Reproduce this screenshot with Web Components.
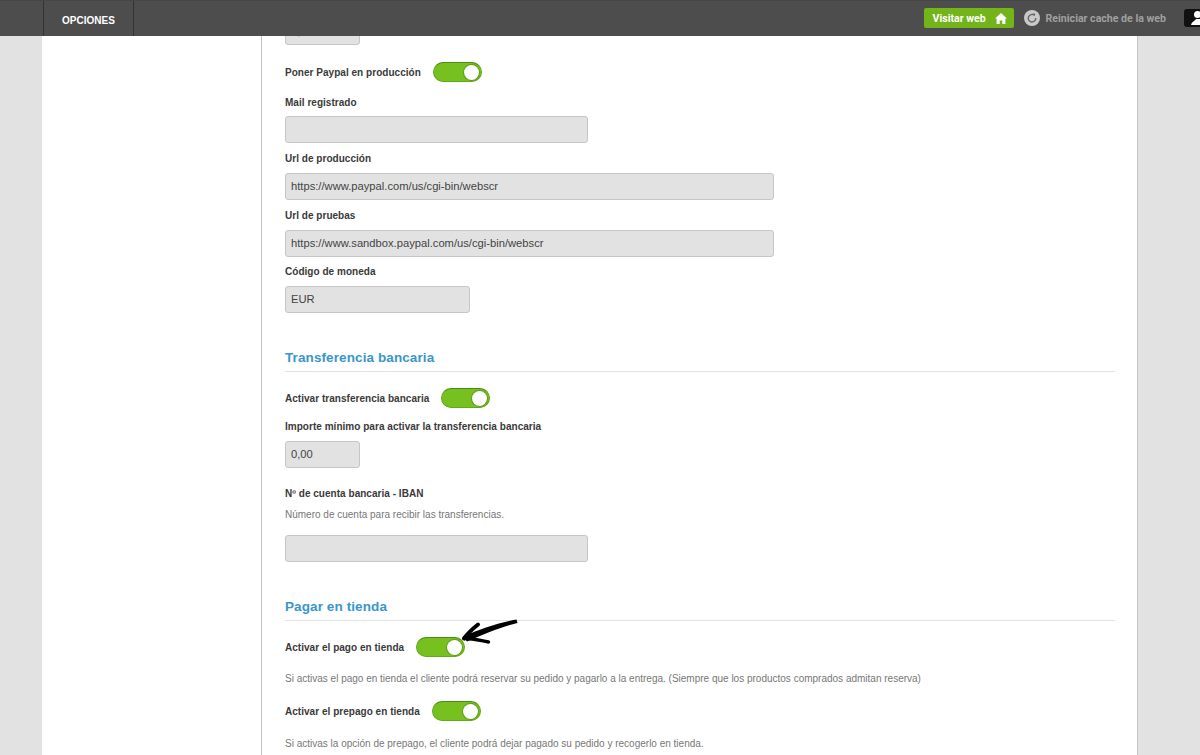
<!DOCTYPE html>
<html lang="es">
<head>
<meta charset="utf-8">
<title>Opciones</title>
<style>
  html, body { margin: 0; height: 755px; overflow: hidden; background: #e2e2e2; }
  body { font-family: "Liberation Sans", Arial, sans-serif; }
  x-field-label, x-toggle-row, x-text-box, x-section-title, x-help-text { --gap: 0px; margin-top: var(--gap); }
</style>
</head>
<body>
<x-top-bar></x-top-bar>
<x-page>
  <x-text-box width="75" value="0,00" style="--gap:-18px"></x-text-box>
  <x-toggle-row style="--gap:17px">Poner Paypal en producción</x-toggle-row>

  <x-field-label style="--gap:13px">Mail registrado</x-field-label>
  <x-text-box width="303" style="--gap:7px"></x-text-box>
  <x-field-label style="--gap:8px">Url de producción</x-field-label>
  <x-text-box width="489" value="https://www.paypal.com/us/cgi-bin/webscr" style="--gap:8px"></x-text-box>
  <x-field-label style="--gap:8px">Url de pruebas</x-field-label>
  <x-text-box width="489" value="https://www.sandbox.paypal.com/us/cgi-bin/webscr" style="--gap:8px"></x-text-box>
  <x-field-label style="--gap:7px">Código de moneda</x-field-label>
  <x-text-box width="185" value="EUR" style="--gap:8px"></x-text-box>

  <x-section-title style="--gap:34px">Transferencia bancaria</x-section-title>
  <x-toggle-row style="--gap:16px">Activar transferencia bancaria</x-toggle-row>
  <x-field-label style="--gap:11px">Importe mínimo para activar la transferencia bancaria</x-field-label>
  <x-text-box width="75" value="0,00" style="--gap:8px"></x-text-box>
  <x-field-label style="--gap:18px">Nº de cuenta bancaria - IBAN</x-field-label>
  <x-help-text style="--gap:7px">Número de cuenta para recibir las transferencias.</x-help-text>
  <x-text-box width="303" style="--gap:14px"></x-text-box>

  <x-section-title style="--gap:34px">Pagar en tienda</x-section-title>
  <x-toggle-row arrow style="--gap:16px">Activar el pago en tienda</x-toggle-row>
  <x-help-text style="--gap:14px">Si activas el pago en tienda el cliente podrá reservar su pedido y pagarlo a la entrega. (Siempre que los productos comprados admitan reserva)</x-help-text>
  <x-toggle-row style="--gap:16px">Activar el prepago en tienda</x-toggle-row>
  <x-help-text style="--gap:15px">Si activas la opción de prepago, el cliente podrá dejar pagado su pedido y recogerlo en tienda.</x-help-text>
</x-page>

<script>
class TopBar extends HTMLElement {
  constructor() {
    super();
    this.attachShadow({mode: "open"});
    this.shadowRoot.innerHTML = `
      <style>
        :host { display: flex; align-items: stretch; position: relative; z-index: 2; height: 36px; background: #4d4d4d; box-sizing: border-box; border-top: 1px solid #454545; font-family: "Roboto", "Liberation Sans", sans-serif; }
        .tab { margin-left: 43px; width: 91px; padding-top: 4px; box-sizing: border-box; border-left: 1px solid #333; border-right: 1px solid #333; color: #fff; font: bold 10px "Liberation Sans", Arial, sans-serif; display: flex; align-items: center; justify-content: center; }
        .right { margin-left: auto; display: flex; align-items: center; }
        .visit { width: 90px; height: 20px; box-sizing: border-box; margin-top: -1px; padding: 0 7px 0 9px; display: flex; align-items: center; justify-content: space-between; background: #72b41a; border-radius: 2px; color: #fff; font-size: 10.6px; font-weight: 700; }
        .reload { margin-left: 10px; display: flex; align-items: center; gap: 6px; color: #a0a0a0; font-size: 10.6px; font-weight: 700; margin-top: -1px; }
        .user { margin-left: 18px; width: 16px; height: 18px; margin-top: -1px; background: #111; border-radius: 3px 0 0 3px; overflow: hidden; }
        svg { display: block; }
      </style>
      <div class="tab">OPCIONES</div>
      <div class="right">
        <div class="visit">Visitar web
          <svg width="12" height="11" viewBox="0 0 12 11"><path d="M6 0 L12 5.6 L10.4 5.6 L10.4 11 L7.3 11 L7.3 7.4 L4.7 7.4 L4.7 11 L1.6 11 L1.6 5.6 L0 5.6 Z" fill="#fff"/></svg>
        </div>
        <div class="reload">
          <svg width="16" height="16" viewBox="0 0 16 16"><circle cx="8" cy="8" r="8" fill="#c9c9c9"/><path d="M10.3 5.2 A3.8 3.8 0 1 0 11.8 8" fill="none" stroke="#666" stroke-width="1.4"/><path d="M8.6 3.4 L11.2 3.6 L10.8 6.2 Z" fill="#666"/></svg>
          Reiniciar cache de la web
        </div>
        <div class="user">
          <svg width="16" height="18" viewBox="0 0 16 18"><circle cx="13.5" cy="5.5" r="3.5" fill="#fff"/><path d="M7 16 C8 12.5 11 12 12 10 L16 10 L16 16 Z" fill="#fff"/></svg>
        </div>
      </div>
    `;
  }
}

class Page extends HTMLElement {
  constructor() {
    super();
    this.attachShadow({mode: "open"});
    this.shadowRoot.innerHTML = `
      <style>
        :host { display: flex; height: 719px; margin-left: 42px; width: 1096px; box-sizing: border-box; background: #fff; border-right: 1px solid #c4c4c4; overflow: hidden; }
        .side { width: 219px; flex: none; border-right: 1px solid #c4c4c4; }
        .main { flex: 1; min-width: 0; padding-left: 23px; padding-right: 22px; display: flex; flex-direction: column; }
      </style>
      <div class="side"></div>
      <div class="main"><slot></slot></div>
    `;
  }
}

class FieldLabel extends HTMLElement {
  constructor() {
    super();
    this.attachShadow({mode: "open"});
    this.shadowRoot.innerHTML = `
      <style>
        :host { display: block; height: 14px; line-height: 16px; color: #3a3a3a; font-size: 10px; font-weight: 700; letter-spacing: .03px; white-space: nowrap; }
      </style>
      <slot></slot>
    `;
  }
}

class HelpText extends HTMLElement {
  constructor() {
    super();
    this.attachShadow({mode: "open"});
    this.shadowRoot.innerHTML = `
      <style>
        :host { display: block; height: 14px; line-height: 16px; color: #777; font-size: 10px; white-space: nowrap; }
      </style>
      <slot></slot>
    `;
  }
}

class SectionTitle extends HTMLElement {
  constructor() {
    super();
    this.attachShadow({mode: "open"});
    this.shadowRoot.innerHTML = `
      <style>
        :host { display: block; height: 25px; box-sizing: border-box; line-height: 22px; border-bottom: 1px solid #e2e2e2; color: #3a96cc; font-size: 13.5px; font-weight: 700; letter-spacing: .1px; white-space: nowrap; }
      </style>
      <slot></slot>
    `;
  }
}

class TextBox extends HTMLElement {
  constructor() {
    super();
    this.attachShadow({mode: "open"});
    this.shadowRoot.innerHTML = `
      <style>
        :host { display: block; height: 27px; box-sizing: border-box; padding: 0 5px; line-height: 25px; background: #e2e2e2; border: 1px solid #c6c6c6; border-radius: 3px; color: #444; font-size: 11.2px; white-space: nowrap; overflow: hidden; }
      </style>
      <span></span>
    `;
  }

  connectedCallback() {
    this.style.width = this.getAttribute("width") + "px";
    this.shadowRoot.querySelector("span").textContent = this.getAttribute("value") || "";
  }
}

class ToggleRow extends HTMLElement {
  constructor() {
    super();
    this.attachShadow({mode: "open"});
    this.shadowRoot.innerHTML = `
      <style>
        :host { display: flex; align-items: center; gap: 12px; position: relative; height: 20px; color: #3a3a3a; font-size: 10px; font-weight: 700; letter-spacing: .03px; white-space: nowrap; }
        .switch { position: relative; width: 49px; height: 20px; box-sizing: border-box; background: #76c11f; border-radius: 10px; border: 1px solid #65a81a; border-top-color: #4f8a12; }
        .knob { position: absolute; top: 1.5px; right: 2px; width: 15px; height: 15px; box-sizing: border-box; background: #fff; border-radius: 50%; box-shadow: 0 0 0 1px #5f9e18; }
        .arrow { position: absolute; left: 175px; top: -19px; }
      </style>
      <slot></slot>
      <div class="switch"><div class="knob"></div></div>
    `;
  }

  connectedCallback() {
    if (this.hasAttribute("arrow")) {
      this.shadowRoot.innerHTML += `
        <svg class="arrow" width="60" height="28" viewBox="0 0 60 28">
          <path d="M3 18.5 C20 11 38 5 56.5 1.5 L57.5 5 C42 8.5 26 15 7 23.5 Z" fill="#000"/>
          <path d="M18 6.5 C13 10.5 8 15 4 20.5" fill="none" stroke="#000" stroke-width="4" stroke-linecap="round"/>
          <path d="M4 20.5 C12 20 20 22.5 28.5 24" fill="none" stroke="#000" stroke-width="3.4" stroke-linecap="round"/>
        </svg>`;
    }
  }
}

customElements.define("x-top-bar", TopBar);
customElements.define("x-page", Page);
customElements.define("x-field-label", FieldLabel);
customElements.define("x-help-text", HelpText);
customElements.define("x-section-title", SectionTitle);
customElements.define("x-text-box", TextBox);
customElements.define("x-toggle-row", ToggleRow);
</script>
</body>
</html>
